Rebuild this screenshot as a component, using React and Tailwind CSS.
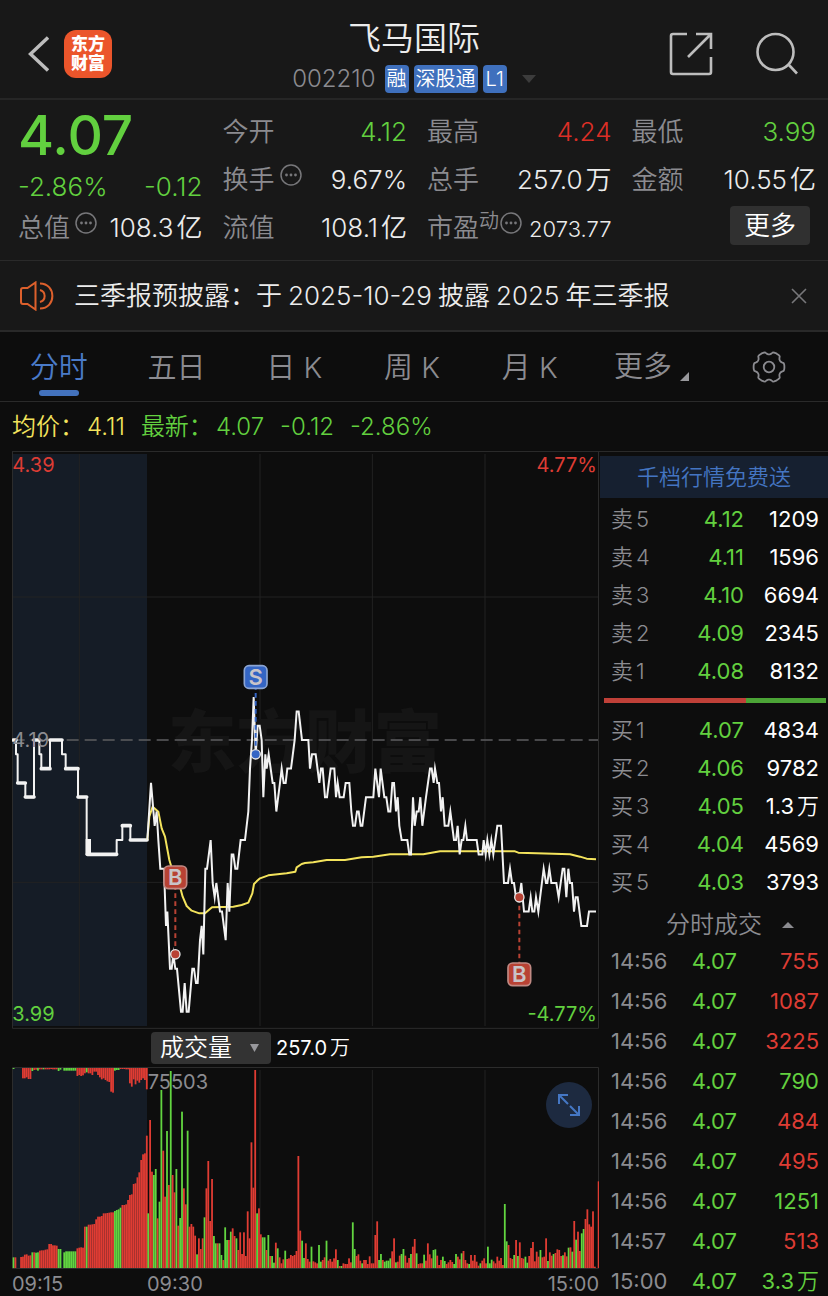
import React, { useState } from "react";

const stats = [
  [
    { label: '今开', value: '4.12', color: 'text-[#62d03f]' },
    { label: '换手', value: '9.67%', info: true },
    { label: '流值', value: '108.1', unit: '亿' },
  ],
  [
    { label: '最高', value: '4.24', color: 'text-[#dc2f26]' },
    { label: '总手', value: '257.0', unit: '万' },
    { label: '市盈', value: '2073.77', sup: '动', info: true, small: true },
  ],
  [
    { label: '最低', value: '3.99', color: 'text-[#62d03f]' },
    { label: '金额', value: '10.55', unit: '亿' },
  ],
];

const tabs = ['分时', '五日', '日 K', '周 K', '月 K'];

const sells = [
  { side: '卖', level: 5, price: '4.12', qty: '1209' },
  { side: '卖', level: 4, price: '4.11', qty: '1596' },
  { side: '卖', level: 3, price: '4.10', qty: '6694' },
  { side: '卖', level: 2, price: '4.09', qty: '2345' },
  { side: '卖', level: 1, price: '4.08', qty: '8132' },
];

const buys = [
  { side: '买', level: 1, price: '4.07', qty: '4834' },
  { side: '买', level: 2, price: '4.06', qty: '9782' },
  { side: '买', level: 3, price: '4.05', qty: '1.3', unit: '万' },
  { side: '买', level: 4, price: '4.04', qty: '4569' },
  { side: '买', level: 5, price: '4.03', qty: '3793' },
];

const trades = [
  { time: '14:56', price: '4.07', qty: '755', up: true },
  { time: '14:56', price: '4.07', qty: '1087', up: true },
  { time: '14:56', price: '4.07', qty: '3225', up: true },
  { time: '14:56', price: '4.07', qty: '790' },
  { time: '14:56', price: '4.07', qty: '484', up: true },
  { time: '14:56', price: '4.07', qty: '495', up: true },
  { time: '14:56', price: '4.07', qty: '1251' },
  { time: '14:57', price: '4.07', qty: '513', up: true },
  { time: '15:00', price: '4.07', qty: '3.3', unit: '万' },
];

// x position, then how many cents the price is below yesterday's close (4.19)
const auctionLine = '38,0 48,0 48,1 53,1 53,3 76,3 76,4 102,4 102,0 118,0 118,1 124,1 124,2 150,2 150,0 186,0 186,1 197,1 197,2 234,2 234,4 260,4 260,8 350,8 350,7 367,7 367,6 391,6 391,7 442,7';

const sessionLine =
  '442,7 453,3 464,6 470,5 475,7 481,9 492,9 498,13 502,12 510,16 515,16 520,15 526,16 531,16 543,19 548,19 554,17 560,19 566,19 577,16 582,16 588,17 593,17 600,14 605,13 610,15 616,9 621,9 632,7 638,10 644,11 649,10 660,12 666,12 677,14 683,10 688,12 695,8 700,8 706,9 712,9 722,7 735,7 745,5 750,2 756,0 761,-3 767,1 773,-1 779,-1 785,0 790,4 796,1 800,2 806,1 818,3 823,3 829,5 840,3 845,2 851,3 857,3 862,2 873,2 884,0 ' +
  '890,-2 896,-2 906,0 925,0 930,2 936,1 947,1 958,3 963,2 968,2 975,4 981,4 992,2 1003,2 1008,4 1013,3 1019,4 1031,4 1037,3 1048,3 1054,5 1059,6 1065,6 1071,5 1076,5 1082,6 1087,6 1098,4 1120,4 1126,2 1137,4 1142,2 1153,4 1159,4 1165,5 1171,5 1177,3 1182,3 1188,5 1193,4 1198,6 1205,7 1222,7 1228,8 1233,8 1239,4 1244,6 1250,5 1256,5 1261,4 1267,6 1278,4 1290,2 1295,2 1301,3 1305,2 1312,3 1317,3 ' +
  '1323,5 1328,4 1334,6 1345,6 1351,5 1362,7 1368,7 1373,6 1379,8 1385,7 1390,7 1396,6 1401,7 1430,7 1436,8 1447,8 1451,7 1457,8 1462,7 1468,8 1474,7 1480,8 1492,6 1503,6 1512,10 1524,10 1530,9 1536,10 1542,10 1548,11 1558,11 1564,10 1572,12 1586,12 1592,11 1597,12 1603,12 1608,11 1615,12 1631,9 1638,10 1642,10 1648,9 1654,10 1669,10 1676,11 1688,9 1693,9 1699,11 1705,9 1710,10 1716,10 1722,12 1727,11 1733,11 1744,13 1761,13 1767,12 1788,12';

const averageLine =
  '442,540 448,470 458,440 475,455 485,505 495,530 508,600 520,640 540,680 548,710 560,738 575,752 598,760 615,760 636,742 700,740 725,735 745,728 757,700 762,672 770,664 780,655 805,646 860,640 886,635 890,622 905,612 915,609 940,607 980,600 1035,600 1085,592 1120,590 1170,583 1270,583 1320,574 1545,574 1555,578 1610,580 1710,583 1740,590 1760,596 1788,598';

// r = red bar, g = green bar, number = where the bar ends, - = no bar
const auctionBars =
  'g712 r712 - - r711 r710 r704 r703 r707 r706 g697 r697 g698 g697 r692 r691 r691 r689 r688 r672 r672 r676 r676 r677 g687 g687 - g697 g694 g694 g694 g694 g694 g694 r685 r683 r682 r683 r620 g620 r614 r614 r613 r612 r598 r590 r590 r588 r580 r580 r579 r578 r577 r577 g573 g570 g568 g563 r555 r555 r553 r540 r525 r523 r492 r490 r472 r457 r420 r403 r400 r347';

const unmatchedBars =
  'g147 - - - - r175 r175 r172 r177 r177 g153 r150 r149 g152 r148 r148 g148 r148 r148 r148 r147 r148 r148 r148 g153 g149 - g152 g152 g152 g152 g152 g152 g152 r168 r165 r168 r166 r160 g157 r160 r160 r165 r155 r155 r165 r172 r178 r175 r180 r184 r186 r215 r218 g152 g150 g150 r147 r147 r147 r148 r148 r190 r200 r178 r193 r182 r188 r180 r175 r180 r208';

const sessionBars =
  'g580 r300 r455 g465 g447 r595 g545 g210 r392 r530 g333 r495 g153 r465 r517 g447 r617 g594 g275 r505 r553 g332 r620 r612 r620 r647 g703 r655 r687 r655 g592 r505 r423 r603 r477 g648 g670 r670 g670 g705 r720 g622 g660 r660 g635 r625 r648 g655 r690 r637 r702 r637 r708 r574 r655 r367 r503 r150 g580 r565 r643 g652 g652 r690 g645 r708 g708 g728 r668 g685 r712 r730 r718 g692 r717 r715 r705 r708 r705 r693 r408 r632 ' +
  'g662 g714 r670 r717 r725 g680 r724 r727 r730 g675 g725 r720 r712 g662 r722 r717 r725 r715 r688 g720 r738 g738 r730 r732 r732 r715 r727 g607 g687 r708 r703 r722 g730 r720 r720 r732 r709 r730 r730 r645 r604 g720 g702 r720 g725 g722 g722 g715 r694 r655 g727 r725 r707 g702 g687 r707 r728 r714 g702 r680 r657 g700 r732 r730 r730 g704 r722 r670 r703 r715 g690 g688 r707 r735 r720 g710 g723 r732 r727 r720 r726 ' +
  'g732 g702 r710 r718 g700 r693 r720 r730 g732 r705 r722 r705 r725 r737 g730 r722 r715 r730 g680 g730 g719 r724 r730 r710 r722 r714 r735 g552 g664 r675 r714 r717 g705 r660 g708 r667 r714 r716 g710 g728 r708 r684 r666 r724 r695 r710 g690 r712 r710 r655 g723 r697 r707 g702 r699 r688 r690 r708 g706 r697 r709 g683 r682 g695 r603 g659 r635 r693 g640 g627 r597 r568 r613 r620 r574 r740 - r484';

const toPoints = (line) =>
  line
    .split(' ')
    .map((pair) => {
      const [x, cents] = pair.split(',').map(Number);
      return `${x},${240 + cents * 42.9}`;
    })
    .join(' ');

// six flat teeth around the circle
const gearPoints = Array.from({ length: 72 }, (_, i) => {
  const a = (i * 5 * Math.PI) / 180;
  const r = 14 + 1.4 * Math.tanh(3 * Math.cos(6 * a) + 1.2);
  return `${(18 + r * Math.cos(a)).toFixed(2)},${(18 + r * Math.sin(a)).toFixed(2)}`;
}).join(' ');

const InfoDots = () => (
  <svg width="24" height="24" viewBox="0 0 24 24" className="mb-2 shrink-0" fill="none" stroke="#77777a">
    <circle cx="12" cy="12" r="10" strokeWidth="1.5" />
    <g fill="#77777a" stroke="none">
      <circle cx="7.5" cy="12" r="1.4" />
      <circle cx="12" cy="12" r="1.4" />
      <circle cx="16.5" cy="12" r="1.4" />
    </g>
  </svg>
);

const Bars = ({ data, start, from }) =>
  data.split(' ').map((bar, i) => {
    if (bar === '-') return null;
    const end = Number(bar.slice(1));
    return (
      <rect
        key={i}
        x={start + i * 5.63}
        y={Math.min(from, end)}
        width="5.4"
        height={Math.abs(from - end)}
        fill={bar[0] === 'r' ? '#e03c33' : '#62d540'}
      />
    );
  });

const Marker = ({ x, badgeY, dotY, letter, color, border }) => (
  <g>
    <line x1={x} x2={x} y1={badgeY} y2={dotY} stroke={color} strokeWidth="6" strokeDasharray="14 10" />
    <circle cx={x} cy={dotY} r="14" fill={color} stroke="#e8e8e8" strokeWidth="4" />
    <rect x={x - 34} y={badgeY - 34} width="68" height="68" rx="14" fill={color} stroke={border} strokeWidth="5" />
    <text x={x} y={badgeY + 23} textAnchor="middle" className="text-[66px] font-semibold" fill="#c9c4c8">
      {letter}
    </text>
  </g>
);

const Header = () => (
  <header className="flex items-center border-b-2 border-[#262626] bg-[#181818] pt-3 pb-1">
    <div className="flex w-44 items-center gap-[15px] pt-[2px] pl-7">
      <button aria-label="返回">
        <svg width="21" height="36" viewBox="0 0 21 36" fill="none" stroke="#bdbdbd" strokeWidth="3.4">
          <path d="M20 1.5 2.5 18 20 34.5" />
        </svg>
      </button>
      <a href="#" className="grid size-12 place-content-center rounded-xl bg-[#eb552b] text-center text-[17px] leading-[19px] font-black text-white">
        <span>东方</span>
        <span>财富</span>
      </a>
    </div>
    <div className="flex flex-1 flex-col items-center">
      <h1 className="text-[33px] leading-[52px] text-[#ececec]">飞马国际</h1>
      <div className="flex h-[30px] items-center gap-[5px]">
        <span className="mr-1 text-2xl text-[#8b8b90]">002210</span>
        <span className="rounded bg-[#3f70bd] px-[2px] text-xl leading-7 text-white">融</span>
        <span className="rounded bg-[#3f70bd] px-[2px] text-xl leading-7 text-white">深股通</span>
        <span className="rounded bg-[#3f70bd] px-[3px] text-xl leading-7 text-white">L1</span>
        <svg width="14" height="8" viewBox="0 0 14 8" className="ml-[10px]">
          <path d="M0 0h14L7 8z" fill="#3c3c3c" />
        </svg>
      </div>
    </div>
    <div className="flex w-44 items-center justify-end gap-[42px] pt-[2px] pr-[29px]">
      <button aria-label="分享">
        <svg width="44" height="44" viewBox="0 0 44 44" fill="none" stroke="#bdbdbd" strokeWidth="2.6">
          <path d="M18 2H4Q2 2 2 4v36q0 2 2 2h36q2 0 2-2V25M27 2h15v15M41 3 19 25" />
        </svg>
      </button>
      <button aria-label="搜索">
        <svg width="44" height="44" viewBox="0 0 44 44" fill="none" stroke="#bdbdbd" strokeWidth="2.6">
          <circle cx="20.500" cy="20" r="18" />
          <path d="m33 32 9 9.500" />
        </svg>
      </button>
    </div>
  </header>
);

const Stats = () => (
  <section className="grid grid-cols-4 gap-5 border-b border-[#2a2a2a] bg-[#181818] pt-[7px] pr-3 pb-[9px] pl-[18px] text-[26px]">
    <div className="text-[#62d03f]">
      <div className="flex h-14 items-center text-[55px] font-medium">4.07</div>
      <div className="flex h-10 items-end justify-between leading-8">
        <span>-2.86%</span>
        <span>-0.12</span>
      </div>
      <div className="flex h-12 items-center justify-between">
        <span className="flex items-center gap-1 text-[#8b8b90]">
          总值
          <InfoDots />
        </span>
        <span className="flex gap-[3px] text-[#ececec]">
          108.3<span>亿</span>
        </span>
      </div>
    </div>
    {stats.map((column, i) => (
      <div key={i}>
        {column.map((item) => (
          <div key={item.label} className="flex h-12 items-center justify-between">
            <span className="flex items-center gap-1 text-[#8b8b90]">
              <span>{item.label}</span>
              {item.sup && <span className="-mx-1 mb-3 text-xl">{item.sup}</span>}
              {item.info && <InfoDots />}
            </span>
            <span className={`flex gap-[3px] ${item.small ? 'pt-1 text-[22px]' : ''} ${item.color || 'text-[#ececec]'}`}>
              {item.value}
              {item.unit && <span>{item.unit}</span>}
            </span>
          </div>
        ))}
        {column.length === 2 && (
          <div className="flex h-12 items-center justify-end">
            <button className="mr-[6px] mb-1 rounded bg-[#303030] px-[14px] leading-[39px] text-white">更多</button>
          </div>
        )}
      </div>
    ))}
  </section>
);

const Notice = () => (
  <section className="flex h-[71px] items-center border-b-2 border-[#292929] bg-[#181818] pr-5 pl-5">
    <svg width="34" height="30" viewBox="0 0 34 30" fill="none" stroke="#dd602c" strokeWidth="2">
      <path d="M15.500 1.500v27L7.500 23H3q-2 0-2-2V9q0-2 2-2h4.500z" />
      <path d="M20 9a6.200 6.200 0 0 1 0 12M20 2.500c16.500 0 16.500 25 0 25" />
    </svg>
    <p className="flex flex-1 gap-[6px] pl-5 text-[26px] text-[#ececec]">
      <span>三季报预披露：于</span>
      <span>2025-10-29</span>
      <span>披露</span>
      <span>2025</span>
      <span>年三季报</span>
    </p>
    <button aria-label="关闭">
      <svg width="18" height="16" viewBox="0 0 18 16" stroke="#77777a" strokeWidth="1.6">
        <path d="m2 1 14 14M16 1 2 15" />
      </svg>
    </button>
  </section>
);

const Tabs = ({ active, onChange }) => (
  <nav className="flex h-[70px] items-center border-b border-[#2a2a2a] text-[29px] text-[#8b8b90]">
    {tabs.map((tab) => (
      <button
        key={tab}
        onClick={() => onChange(tab)}
        className={`flex h-full flex-1 flex-col items-center justify-end pb-[5px] ${tab === active ? 'text-[#4a7bc8]' : ''}`}
      >
        <span className="leading-[44px]">{tab}</span>
        <span className={`h-[6px] w-10 rounded-full ${tab === active ? 'bg-[#4372bd]' : ''}`} />
      </button>
    ))}
    <button className="flex flex-1 items-center justify-center gap-2 pl-1">
      更多
      <svg width="9" height="9" viewBox="0 0 9 9" className="mt-5">
        <path d="M9 0v9H0z" fill="#98989c" />
      </svg>
    </button>
    <button aria-label="设置" className="flex flex-1 justify-center">
      <svg width="36" height="36" viewBox="0 0 36 36" fill="none" stroke="#8b8b90" strokeWidth="1.8">
        <polygon points={gearPoints} strokeLinejoin="round" />
        <circle cx="18" cy="18" r="5.300" />
      </svg>
    </button>
  </nav>
);

const PriceChart = () => (
  <svg viewBox="36 -624 1761 1731" className="block h-auto w-full font-normal">
    <rect x="38" y="-618" width="403" height="1716" fill="#151c26" />
    <g stroke="#222222" strokeWidth="3">
      <path d="M238-618V1098M780-618V1098M1117-618V1098M1455-618V1098M38-189H1794M38 667H1794" />
      <path d="M37.500-624V1105H1795.500V-624" fill="none" stroke="#2c2c2c" />
    </g>
    <text x="503" y="320" className="text-[206px] font-black" fill="#151515">东方财富</text>
    <line x1="38" x2="1794" y1="240" y2="240" stroke="#5d5d60" strokeWidth="5" strokeDasharray="36 18" />
    <polyline points={toPoints(auctionLine)} fill="none" stroke="#f2f2f2" strokeWidth="6" strokeLinejoin="round" />
    <path d="M260 583V540H270V583z" fill="#f2f2f2" stroke="#f2f2f2" strokeWidth="6" />
    <path d="M40 240h8M53 369h23M76 411h26M102 240h16M124 326h26M150 240h36M197 326h37M234 411h26M262 583h88M367 497h24M391 540h50" stroke="#f2f2f2" strokeWidth="11" strokeLinecap="round" />
    <polyline points={averageLine} fill="none" stroke="#f3e35c" strokeWidth="6" strokeLinejoin="round" />
    <polyline points={toPoints(sessionLine)} fill="none" stroke="#f2f2f2" strokeWidth="6" strokeMiterlimit="8" />
    <Marker x={526} badgeY={652} dotY={883} letter="B" color="#b84234" border="#c08a84" />
    <Marker x={767} badgeY={51} dotY={283} letter="S" color="#3465c4" border="#8ca5d2" />
    <Marker x={1558} badgeY={943} dotY={712} letter="B" color="#b84234" border="#c08a84" />
    <g className="text-[60px]">
      <text x="37" y="-564" fill="#dd3c34">4.39</text>
      <text x="1791" y="-564" textAnchor="end" fill="#dd3c34">4.77%</text>
      <text x="37" y="260" fill="#8b8b90">4.19</text>
      <text x="37" y="1082" fill="#62d03f">3.99</text>
      <text x="1791" y="1082" textAnchor="end" fill="#62d03f">-4.77%</text>
    </g>
  </svg>
);

const VolumeChart = () => (
  <div className="relative">
    <svg viewBox="36 141 1761 606" className="block h-auto w-full font-normal">
      <rect x="38" y="144" width="403" height="600" fill="#151c26" />
      <path d="M238 144V744M780 150V744M1117 150V744M1455 150V744" stroke="#222222" strokeWidth="3" />
      <path d="M37.500 142.500H1795.500V745.500H37.500z" fill="none" stroke="#2c2c2c" strokeWidth="3" />
      <text x="443" y="208" className="text-[60px]" fill="#8b8b90">75503</text>
      <Bars data={auctionBars} start={38} from={744} />
      <Bars data={unmatchedBars} start={38} from={144} />
      <Bars data={sessionBars} start={442} from={744} />
    </svg>
    <button aria-label="全屏" className="absolute top-[15px] right-[7px] grid size-[46px] place-content-center rounded-full bg-[#1d2a40]">
      <svg width="24" height="24" viewBox="0 0 24 24" fill="none" stroke="#4577c4" strokeWidth="2">
        <path d="M11 2H2v9M2 2l9 9M13 22h9v-9M22 22l-9-9" />
      </svg>
    </button>
  </div>
);

const Quantity = ({ qty, unit }) => (
  <>
    {qty}
    {unit && <span className="ml-[3px] font-[350]">{unit}</span>}
  </>
);

const OrderTable = ({ rows }) => (
  <table className="w-full table-fixed text-[22px]">
    <tbody>
      {rows.map((row) => (
        <tr key={row.level} className="h-[38px]">
          <th className="w-16 pl-[11px] text-left font-[350] text-[#8b8b90]">
            {row.side}
            <span className="ml-[3px]">{row.level}</span>
          </th>
          <td className="text-right font-normal text-[#62d03f]">{row.price}</td>
          <td className="w-[84px] pr-[9px] text-right font-normal text-white">
            <Quantity qty={row.qty} unit={row.unit} />
          </td>
        </tr>
      ))}
    </tbody>
  </table>
);

const OrderBook = () => (
  <aside className="w-[228px] shrink-0">
    <a href="#" className="mt-[4px] mb-[2px] block bg-[#162030] text-center text-[22px] leading-[42px] text-[#4475c2]">
      千档行情免费送
    </a>
    <OrderTable rows={sells} />
    <div className="mt-2 mr-[2px] mb-2 ml-1 flex h-[5px] bg-[#4ba336]">
      <div className="w-[64%] bg-[#bf4038]" />
    </div>
    <OrderTable rows={buys} />
    <button className="mt-[14px] flex h-5 w-full items-center justify-center gap-5 pl-8 text-2xl text-[#8b8b90]">
      分时成交
      <svg width="12" height="6" viewBox="0 0 12 6">
        <path d="M6 0l6 6H0z" fill="#8b8b90" />
      </svg>
    </button>
    <table className="w-full table-fixed text-[22px] leading-7 font-normal">
      <tbody>
        {trades.map((trade, i) => (
          <tr key={i}>
            <td className="w-[76px] pt-3 pl-[11px] text-[#8b8b90]">{trade.time}</td>
            <td className="pt-3 pr-[7px] text-right text-[#62d03f]">{trade.price}</td>
            <td className={`w-[84px] pt-3 pr-[9px] text-right ${trade.up ? 'text-[#dd3c34]' : 'text-[#62d03f]'}`}>
              <Quantity qty={trade.qty} unit={trade.unit} />
            </td>
          </tr>
        ))}
      </tbody>
    </table>
  </aside>
);

const App = () => {
  const [active, setActive] = useState('分时');

  return (
    <div className="min-h-screen bg-[#0d0d0d] font-[Inter,'Noto_Sans_CJK_SC',sans-serif] font-[350]">
      <Header />
      <Stats />
      <Notice />
      <Tabs active={active} onChange={setActive} />
      <div className="ml-3 flex h-[50px] items-center gap-4 border-b border-[#2a2a2a] text-2xl">
        <span className="text-[#f3e35c]">均价：<span className="ml-[3px]">4.11</span></span>
        <span className="text-[#62d03f]">最新：<span className="ml-[3px]">4.07</span></span>
        <span className="text-[#62d03f]">-0.12</span>
        <span className="text-[#62d03f]">-2.86%</span>
      </div>
      <main className="flex gap-px">
        <div className="min-w-0 flex-1 pl-3">
          <PriceChart />
          <div className="flex h-[38px] items-center gap-[5px] pl-[139px] text-xl text-white">
            <div className="relative">
              <select aria-label="指标" className="h-8 w-[120px] appearance-none rounded bg-[#333333] pl-[9px] text-2xl">
                <option>成交量</option>
              </select>
              <svg width="9" height="8" viewBox="0 0 9 8" className="pointer-events-none absolute top-3 right-3">
                <path d="M0 0h9L4.500 8z" fill="#98989c" />
              </svg>
            </div>
            <span className="font-normal">
              <Quantity qty="257.0" unit="万" />
            </span>
          </div>
          <VolumeChart />
          <div className="flex h-7 items-center pt-[2px] text-xl font-normal text-[#8b8b90]">
            <span className="w-[135px]">09:15</span>
            <span>09:30</span>
            <span className="ml-auto">15:00</span>
          </div>
        </div>
        <OrderBook />
      </main>
    </div>
  );
};

export default App;
